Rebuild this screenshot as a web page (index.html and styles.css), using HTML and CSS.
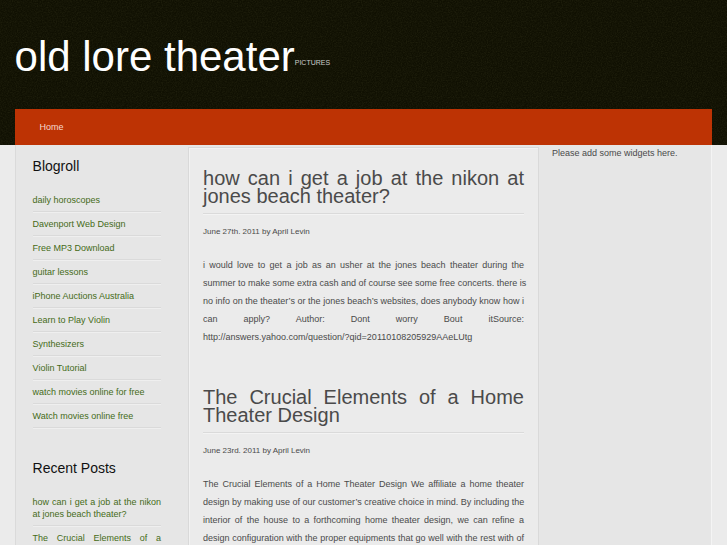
FILE: index.html
```html
<!DOCTYPE html>
<html lang="en">
<head>
    <meta charset="UTF-8">
    <meta name="viewport" content="width=device-width, initial-scale=1.0">
    <title>old lore theater</title>
    <link rel="stylesheet" href="styles.css">
</head>
<body>
    <div class="header">
        <div class="wrap">
            <div class="branding">
                <h1><a href="#">old lore theater</a></h1>
                <span class="description">Pictures</span>
            </div>
            <nav class="menu">
                <a href="#">Home</a>
            </nav>
        </div>
    </div>

    <div class="wrap columns">
        <aside class="sidebar">
            <h2>Blogroll</h2>
            <ul>
                <li><a href="#">daily horoscopes</a></li>
                <li><a href="#">Davenport Web Design</a></li>
                <li><a href="#">Free MP3 Download</a></li>
                <li><a href="#">guitar lessons</a></li>
                <li><a href="#">iPhone Auctions Australia</a></li>
                <li><a href="#">Learn to Play Violin</a></li>
                <li><a href="#">Synthesizers</a></li>
                <li><a href="#">Violin Tutorial</a></li>
                <li><a href="#">watch movies online for free</a></li>
                <li><a href="#">Watch movies online free</a></li>
            </ul>
            <h2>Recent Posts</h2>
            <ul>
                <li><a href="#">how can i get a job at the nikon at jones beach theater?</a></li>
                <li><a href="#">The Crucial Elements of a Home Theater Design</a></li>
            </ul>
        </aside>

        <main class="content">
            <article class="post">
                <h2>how can i get a job at the nikon at jones beach theater?</h2>
                <p class="meta">June 27th. 2011 by April Levin</p>
                <p class="entry">
                    <span class="line">i would love to get a job as an usher at the jones beach theater during the</span>
                    <span class="line">summer to make some extra cash and of course see some free concerts. there is</span>
                    <span class="line">no info on the theater’s or the jones beach’s websites, does anybody know how i</span>
                    <span class="line">can apply? Author: Dont worry Bout itSource:</span>
                    http://answers.yahoo.com/question/?qid=20110108205929AAeLUtg
                </p>
            </article>
            <article class="post">
                <h2>The Crucial Elements of a Home Theater Design</h2>
                <p class="meta">June 23rd. 2011 by April Levin</p>
                <p class="entry">
                    <span class="line">The Crucial Elements of a Home Theater Design We affiliate a home theater</span>
                    <span class="line">design by making use of our customer’s creative choice in mind. By including the</span>
                    <span class="line">interior of the house to a forthcoming home theater design, we can refine a</span>
                    <span class="line">design configuration with the proper equipments that go well with the rest with of</span>
                </p>
            </article>
        </main>

        <aside class="widgets">Please add some widgets here.</aside>
    </div>
</body>
</html>
```

FILE: styles.css
```css
* {
    margin: 0;
    padding: 0;
    box-sizing: border-box;
}

html {
    height: 100%;
    overflow: hidden;
}

body {
    height: 100%;
    overflow: hidden;
    background: #ebebeb;
    color: #4a4a4a;
    font: 9px/18px "Liberation Sans", Arial, sans-serif;
}

a {
    text-decoration: none;
}

.wrap {
    width: 96%;
    margin: 0 auto;
}

/* header */
.header {
    background-color: #101002;
    /* fine grain over the dark background */
    background-image: url("data:image/svg+xml,%3Csvg xmlns='http://www.w3.org/2000/svg' width='200' height='200'%3E%3Cfilter id='n'%3E%3CfeTurbulence type='fractalNoise' baseFrequency='0.8' numOctaves='2' stitchTiles='stitch'/%3E%3CfeColorMatrix values='0 0 0 0 0.3 0 0 0 0 0.3 0 0 0 0 0.1 0.2 0 0 0 -0.07'/%3E%3C/filter%3E%3Crect width='200' height='200' filter='url(%23n)'/%3E%3C/svg%3E");
}

.branding {
    display: flex;
    align-items: baseline;
    height: 109px;
    padding-top: 32px;
}

.branding h1 {
    font-size: 42px;
    font-weight: normal;
    line-height: 50px;
}

.branding h1 a {
    color: #fff;
}

.description {
    padding-bottom: 5px;
    color: #ccc;
    font-size: 7px;
    text-transform: uppercase;
    transform: translateY(-6px);
}

.menu {
    display: flex;
    padding: 0 25px;
    background: #bd3304;
    line-height: 36px;
}

.menu a {
    color: #f5d9cf;
}

/* columns */
.columns {
    display: grid;
    grid-template-columns: minmax(0, 1fr) minmax(0, 2fr) minmax(0, 1fr);
    min-height: calc(100% - 145px);
    background: #e6e6e6;
    box-shadow: inset 1px 0 0 #dadada, inset -1px 0 0 #f4f4f4;
}

.sidebar {
    padding: 12px 28px 0 18px;
    line-height: 12px;
    text-align: justify;
}

.sidebar h2 {
    margin-bottom: 13px;
    color: #111;
    font-size: 14px;
    font-weight: normal;
    line-height: 18px;
}

.sidebar ul {
    margin-bottom: 31px;
    list-style: none;
}

.sidebar li {
    padding: 6px 0 5px;
    border-bottom: 1px solid #dadada;
    box-shadow: 0 1px 0 #efefef;
}

.sidebar a {
    color: #456b17;
}

/* the middle column overlaps both sidebars slightly */
.content {
    margin: 2px -1px 0;
    padding: 21px 14px 0;
    background: #ebebeb;
    border: 1px solid #d9d9d9;
    border-bottom: none;
    box-shadow: inset 1px 1px 0 #f2f2f2;
    text-align: justify;
}

.post {
    margin-bottom: 42px;
}

.post h2 {
    padding-bottom: 8px;
    border-bottom: 1px solid #dadada;
    box-shadow: 0 1px 0 #f3f3f3;
    font-size: 20px;
    font-weight: normal;
    line-height: 18px;
}

.meta {
    margin: 9px 0 15px;
    font-size: 8px;
}

.line {
    display: block;
    text-align-last: justify;
    white-space: nowrap;
}

.widgets {
    padding: 0 14px;
    line-height: 17px;
}
```
